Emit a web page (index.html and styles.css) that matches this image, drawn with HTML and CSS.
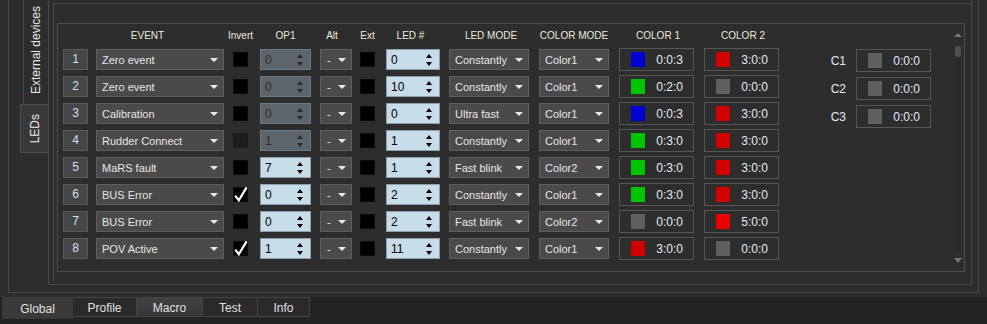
FILE: index.html
```html
<!DOCTYPE html>
<html lang="en">
<head>
    <meta charset="UTF-8">
    <title>LEDs</title>
    <link rel="stylesheet" href="styles.css">
</head>
<body>
    <div class="workspace">
        <div class="frame-outer">
            <div class="vtabs">
                <div class="vtab"><span>External devices</span></div>
                <div class="vtab vtab-active"><span>LEDs</span></div>
            </div>
            <div class="pane">
                <div class="scroll-frame">
                    <div class="led-group">
                        <div class="led-table">
                            <div class="led-head">
                                <div class="h w-num"></div>
                                <div class="h w-event h-event">EVENT</div>
                                <div class="h w-check">Invert</div>
                                <div class="h w-op">OP1</div>
                                <div class="h w-alt h-alt">Alt</div>
                                <div class="h w-check">Ext</div>
                                <div class="h w-led h-led">LED #</div>
                                <div class="h w-mode h-mode">LED MODE</div>
                                <div class="h w-cmode">COLOR MODE</div>
                                <div class="h w-color h-color">COLOR 1</div>
                                <div class="h w-color h-color">COLOR 2</div>
                            </div>
                            <div class="led-rows">
                                <div class="led-row">
                                    <div class="num">1</div>
                                    <div class="combo w-event">Zero event</div>
                                    <div class="check"></div>
                                    <div class="spin w-op off">0<span class="spin-btn"><i class="up"></i><i class="down"></i></span></div>
                                    <div class="combo w-alt">-</div>
                                    <div class="check"></div>
                                    <div class="spin w-led">0<span class="spin-btn"><i class="up"></i><i class="down"></i></span></div>
                                    <div class="combo w-mode">Constantly</div>
                                    <div class="combo w-cmode">Color1</div>
                                    <div class="color"><span class="sw blue"></span><span class="val">0:0:3</span></div>
                                    <div class="color"><span class="sw red"></span><span class="val">3:0:0</span></div>
                                </div>
                                <div class="led-row">
                                    <div class="num">2</div>
                                    <div class="combo w-event">Zero event</div>
                                    <div class="check"></div>
                                    <div class="spin w-op off">0<span class="spin-btn"><i class="up"></i><i class="down"></i></span></div>
                                    <div class="combo w-alt">-</div>
                                    <div class="check"></div>
                                    <div class="spin w-led">10<span class="spin-btn"><i class="up"></i><i class="down"></i></span></div>
                                    <div class="combo w-mode">Constantly</div>
                                    <div class="combo w-cmode">Color1</div>
                                    <div class="color"><span class="sw green"></span><span class="val">0:2:0</span></div>
                                    <div class="color"><span class="sw gray"></span><span class="val">0:0:0</span></div>
                                </div>
                                <div class="led-row">
                                    <div class="num">3</div>
                                    <div class="combo w-event">Calibration</div>
                                    <div class="check"></div>
                                    <div class="spin w-op off">0<span class="spin-btn"><i class="up"></i><i class="down"></i></span></div>
                                    <div class="combo w-alt">-</div>
                                    <div class="check"></div>
                                    <div class="spin w-led">0<span class="spin-btn"><i class="up"></i><i class="down"></i></span></div>
                                    <div class="combo w-mode">Ultra fast</div>
                                    <div class="combo w-cmode">Color1</div>
                                    <div class="color"><span class="sw blue"></span><span class="val">0:0:3</span></div>
                                    <div class="color"><span class="sw red"></span><span class="val">3:0:0</span></div>
                                </div>
                                <div class="led-row">
                                    <div class="num">4</div>
                                    <div class="combo w-event">Rudder Connect</div>
                                    <div class="check disabled"></div>
                                    <div class="spin w-op off">1<span class="spin-btn"><i class="up"></i><i class="down"></i></span></div>
                                    <div class="combo w-alt">-</div>
                                    <div class="check"></div>
                                    <div class="spin w-led">1<span class="spin-btn"><i class="up"></i><i class="down"></i></span></div>
                                    <div class="combo w-mode">Constantly</div>
                                    <div class="combo w-cmode">Color1</div>
                                    <div class="color"><span class="sw green"></span><span class="val">0:3:0</span></div>
                                    <div class="color"><span class="sw red"></span><span class="val">3:0:0</span></div>
                                </div>
                                <div class="led-row">
                                    <div class="num">5</div>
                                    <div class="combo w-event">MaRS fault</div>
                                    <div class="check"></div>
                                    <div class="spin w-op">7<span class="spin-btn"><i class="up"></i><i class="down"></i></span></div>
                                    <div class="combo w-alt">-</div>
                                    <div class="check"></div>
                                    <div class="spin w-led">1<span class="spin-btn"><i class="up"></i><i class="down"></i></span></div>
                                    <div class="combo w-mode">Fast blink</div>
                                    <div class="combo w-cmode">Color2</div>
                                    <div class="color"><span class="sw green"></span><span class="val">0:3:0</span></div>
                                    <div class="color"><span class="sw red"></span><span class="val">3:0:0</span></div>
                                </div>
                                <div class="led-row">
                                    <div class="num">6</div>
                                    <div class="combo w-event">BUS Error</div>
                                    <div class="check"><svg class="tick" width="15" height="15" viewBox="0 0 15 15"><path d="M2.2 8.6 L5.8 13.2 L13.6 0.4"/></svg></div>
                                    <div class="spin w-op">0<span class="spin-btn"><i class="up"></i><i class="down"></i></span></div>
                                    <div class="combo w-alt">-</div>
                                    <div class="check"></div>
                                    <div class="spin w-led">2<span class="spin-btn"><i class="up"></i><i class="down"></i></span></div>
                                    <div class="combo w-mode">Constantly</div>
                                    <div class="combo w-cmode">Color1</div>
                                    <div class="color"><span class="sw green"></span><span class="val">0:3:0</span></div>
                                    <div class="color"><span class="sw red"></span><span class="val">3:0:0</span></div>
                                </div>
                                <div class="led-row">
                                    <div class="num">7</div>
                                    <div class="combo w-event">BUS Error</div>
                                    <div class="check"></div>
                                    <div class="spin w-op">0<span class="spin-btn"><i class="up"></i><i class="down"></i></span></div>
                                    <div class="combo w-alt">-</div>
                                    <div class="check"></div>
                                    <div class="spin w-led">2<span class="spin-btn"><i class="up"></i><i class="down"></i></span></div>
                                    <div class="combo w-mode">Fast blink</div>
                                    <div class="combo w-cmode">Color2</div>
                                    <div class="color"><span class="sw gray"></span><span class="val">0:0:0</span></div>
                                    <div class="color"><span class="sw bright-red"></span><span class="val">5:0:0</span></div>
                                </div>
                                <div class="led-row">
                                    <div class="num">8</div>
                                    <div class="combo w-event">POV Active</div>
                                    <div class="check"><svg class="tick" width="15" height="15" viewBox="0 0 15 15"><path d="M2.2 8.6 L5.8 13.2 L13.6 0.4"/></svg></div>
                                    <div class="spin w-op">1<span class="spin-btn"><i class="up"></i><i class="down"></i></span></div>
                                    <div class="combo w-alt">-</div>
                                    <div class="check"></div>
                                    <div class="spin w-led">11<span class="spin-btn"><i class="up"></i><i class="down"></i></span></div>
                                    <div class="combo w-mode">Constantly</div>
                                    <div class="combo w-cmode">Color1</div>
                                    <div class="color"><span class="sw red"></span><span class="val">3:0:0</span></div>
                                    <div class="color"><span class="sw gray"></span><span class="val">0:0:0</span></div>
                                </div>
                            </div>
                        </div>

                        <div class="presets">
                            <div class="preset">
                                <span class="preset-label">C1</span>
                                <div class="color"><span class="sw gray"></span><span class="val">0:0:0</span></div>
                            </div>
                            <div class="preset">
                                <span class="preset-label">C2</span>
                                <div class="color"><span class="sw gray"></span><span class="val">0:0:0</span></div>
                            </div>
                            <div class="preset">
                                <span class="preset-label">C3</span>
                                <div class="color"><span class="sw gray"></span><span class="val">0:0:0</span></div>
                            </div>
                        </div>

                        <div class="scrollbar">
                            <i class="sb-up"></i>
                            <div class="sb-handle"></div>
                            <div class="sb-track"></div>
                            <i class="sb-down"></i>
                        </div>
                    </div>
                </div>
            </div>
        </div>
    </div>

    <div class="tabbar">
        <div class="tab tab-active">Global</div>
        <div class="tab t-profile">Profile</div>
        <div class="tab tab-hover t-macro">Macro</div>
        <div class="tab t-test">Test</div>
        <div class="tab t-info">Info</div>
    </div>
</body>
</html>
```

FILE: styles.css
```css
body {
    margin: 0;
    width: 987px;
    height: 324px;
    overflow: hidden;
    background: #2d2d2d;
    color: #e4e4e4;
    font-family: "Liberation Sans", Arial, sans-serif;
}
.workspace {
    height: 297px;
    padding: 0 8px;
    box-sizing: border-box;
}
.frame-outer {
    height: 293px;
    border: 1px solid #4a4a4a;
    border-top: none;
    box-sizing: border-box;
    padding-right: 6px;
    display: flex;
}

/* vertical tabs */
.vtabs {
    width: 39px;
    margin-top: -3px;
    display: flex;
    flex-direction: column;
    align-items: flex-end;
}
.vtab {
    width: 25px;
    height: 107px;
    box-sizing: border-box;
    border-left: 1px solid #4a4a4a;
    display: flex;
    align-items: center;
    justify-content: center;
    font-size: 12px;
    color: #e8e8e8;
}
.vtab span {
    writing-mode: vertical-rl;
    transform: rotate(180deg);
    white-space: nowrap;
}
.vtab-active {
    width: 28px;
    height: 49px;
    background: #383838;
    border: 1px solid #4e4e4e;
    border-right: none;
}

.pane {
    flex: 1;
    height: 285px;
    border: 1px solid #4a4a4a;
    border-top: none;
    box-sizing: border-box;
    padding: 3px 0 0 4px;
}
.scroll-frame {
    height: 278px;
    border-left: 1px solid #4a4a4a;
    border-top: 1px solid #4a4a4a;
    box-sizing: border-box;
    padding: 19px 6px 0 3px;
}
.led-group {
    height: 249px;
    border: 1px solid #4d4d4d;
    box-sizing: border-box;
    padding: 0 2px 0 5px;
    display: flex;
}

/* table */
.led-head,
.led-row {
    display: grid;
    grid-template-columns: 33px 137px 27px 60px 40px 26px 63px 90px 80px 85px 75px;
    align-items: center;
}
.led-head {
    height: 25px;
    padding-bottom: 3px;
    box-sizing: border-box;
}
.h {
    display: flex;
    justify-content: center;
    white-space: nowrap;
    font-size: 10px;
    color: #ecebdc;
    box-sizing: border-box;
}
.h-event { padding-right: 25px; }
.h-alt { padding-right: 14px; }
.h-led { padding-right: 5px; }
.h-mode { padding-left: 4px; }
.h-color { padding-left: 3px; }

.led-rows {
    display: flex;
    flex-direction: column;
    gap: 6px;
}
.led-row {
    height: 21px;
}

.w-num { width: 25px; }
.w-event { width: 128px; }
.w-check { width: 15px; }
.w-op { width: 51px; }
.w-alt { width: 32px; }
.w-led { width: 54px; }
.w-mode { width: 80px; }
.w-cmode { width: 70px; }
.w-color { width: 75px; }

.num {
    width: 25px;
    height: 21px;
    box-sizing: border-box;
    border: 1px solid #5a5a5a;
    background: #464646;
    text-align: center;
    line-height: 19px;
    font-size: 12px;
    color: #d2e0ee;
}
.combo {
    height: 21px;
    box-sizing: border-box;
    border: 1px solid #5f5f5f;
    background: #4a4a4a;
    padding-left: 5px;
    display: flex;
    align-items: center;
    font-size: 11px;
    color: #e6e6e6;
    white-space: nowrap;
}
.combo::after {
    content: "";
    margin-left: auto;
    margin-right: 5px;
    border-left: 4px solid transparent;
    border-right: 4px solid transparent;
    border-top: 4px solid #e8e8e8;
}
.w-alt {
    padding-left: 6px;
}

.check {
    width: 15px;
    height: 15px;
    box-sizing: border-box;
    background: #000;
    border: 1px solid #0c0c0c;
}
.check.disabled {
    background: #1d1d1d;
    border-color: #1a1a1a;
}
.tick {
    display: block;
    margin: -1px;
    overflow: visible;
}
.tick path {
    fill: none;
    stroke: #fff;
    stroke-width: 2.2;
}

.spin {
    height: 21px;
    box-sizing: border-box;
    border: 1px solid #8d9fa9;
    background: #c6dce8;
    padding-left: 4px;
    display: flex;
    align-items: center;
    font-size: 12px;
    color: #000;
}
.spin.off {
    background: #5c656b;
    border-color: #6f7a80;
    color: #2c2c2c;
}
.spin-btn {
    margin-left: auto;
    margin-right: 7px;
    display: flex;
    flex-direction: column;
    gap: 4px;
}
.spin-btn i {
    display: block;
    border-left: 3.5px solid transparent;
    border-right: 3.5px solid transparent;
}
.spin-btn .up { border-bottom: 4px solid #000; }
.spin-btn .down { border-top: 4px solid #000; }
.spin.off .spin-btn .up { border-bottom-color: #2a2a2a; }
.spin.off .spin-btn .down { border-top-color: #2a2a2a; }

.color {
    width: 75px;
    height: 23px;
    margin: -1px 0;
    box-sizing: border-box;
    border: 1px solid #565656;
    padding: 0 10px 0 11px;
    display: flex;
    align-items: center;
    font-size: 12px;
    color: #e4eaf2;
}
.sw {
    width: 14px;
    height: 15px;
}
.val {
    margin-left: auto;
}
.blue { background: #0000d2; }
.green { background: #00c400; }
.red { background: #d00000; }
.bright-red { background: #e80000; }
.gray { background: #5f5f5f; }

/* presets on the right */
.presets {
    margin-left: 43px;
    padding-top: 25px;
    display: flex;
    flex-direction: column;
    gap: 5px;
}
.preset {
    display: flex;
    align-items: center;
    gap: 10px;
}
.preset .color {
    margin: 0;
}
.preset-label {
    width: 24px;
    text-align: right;
    font-size: 12px;
    color: #e4eaf2;
}

.scrollbar {
    margin-left: auto;
    width: 9px;
    padding: 9px 0 8px;
    display: flex;
    flex-direction: column;
    align-items: center;
}
.sb-up,
.sb-down {
    display: block;
    border-left: 4px solid transparent;
    border-right: 4px solid transparent;
}
.sb-up { border-bottom: 4px solid #777; }
.sb-down { border-top: 5px solid #777; }
.sb-handle {
    width: 6px;
    height: 11px;
    margin-top: 9px;
    border-radius: 3px;
    background: #505050;
}
.sb-track {
    flex: 1;
    width: 4px;
    margin-bottom: 6px;
    background: #2a2a2a;
}

/* bottom tabs */
.tabbar {
    height: 27px;
    background: #232323;
    padding-left: 2px;
    display: flex;
    align-items: flex-start;
}
.tab {
    height: 20px;
    box-sizing: border-box;
    border: 1px solid #454545;
    border-left: none;
    background: #2a2a2a;
    padding-top: 2px;
    line-height: 17px;
    text-align: center;
    font-size: 12px;
    color: #e0e0e0;
}
.tab-active {
    width: 71px;
    height: 22px;
    padding-top: 4px;
    background: #3a3a3a;
    border: none;
}
.tab-hover {
    background: linear-gradient(#424242, #363636);
}
.t-profile { width: 64px; }
.t-macro { width: 66px; }
.t-test { width: 55px; }
.t-info { width: 52px; }
```
